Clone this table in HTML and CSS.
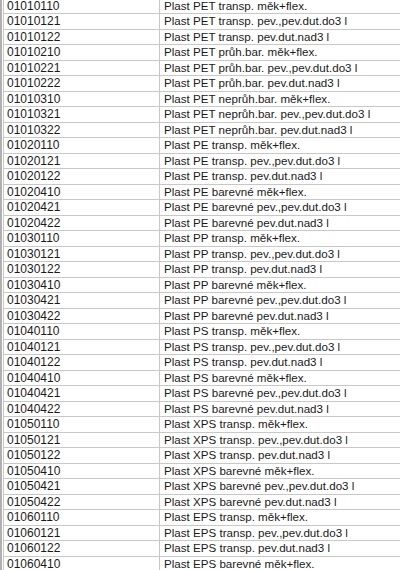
FILE: index.html
```html
<!DOCTYPE html>
<html lang="cs">
<head>
  <meta charset="UTF-8">
  <meta name="viewport" content="width=device-width, initial-scale=1.0">
  <title>Číselník plastů</title>
  <link rel="stylesheet" href="styles.css">
</head>
<body>
  <div class="sheet">
    <table class="codes">
      <tbody>
        <tr><td class="code">01010110</td><td class="name">Plast PET transp. měk+flex.</td></tr>
        <tr><td class="code">01010121</td><td class="name">Plast PET transp. pev.,pev.dut.do3 l</td></tr>
        <tr><td class="code">01010122</td><td class="name">Plast PET transp. pev.dut.nad3 l</td></tr>
        <tr><td class="code">01010210</td><td class="name">Plast PET průh.bar. měk+flex.</td></tr>
        <tr><td class="code">01010221</td><td class="name">Plast PET průh.bar. pev.,pev.dut.do3 l</td></tr>
        <tr><td class="code">01010222</td><td class="name">Plast PET průh.bar. pev.dut.nad3 l</td></tr>
        <tr><td class="code">01010310</td><td class="name">Plast PET neprůh.bar. měk+flex.</td></tr>
        <tr><td class="code">01010321</td><td class="name">Plast PET neprůh.bar. pev.,pev.dut.do3 l</td></tr>
        <tr><td class="code">01010322</td><td class="name">Plast PET neprůh.bar. pev.dut.nad3 l</td></tr>
        <tr><td class="code">01020110</td><td class="name">Plast PE transp. měk+flex.</td></tr>
        <tr><td class="code">01020121</td><td class="name">Plast PE transp. pev.,pev.dut.do3 l</td></tr>
        <tr><td class="code">01020122</td><td class="name">Plast PE transp. pev.dut.nad3 l</td></tr>
        <tr><td class="code">01020410</td><td class="name">Plast PE barevné měk+flex.</td></tr>
        <tr><td class="code">01020421</td><td class="name">Plast PE barevné pev.,pev.dut.do3 l</td></tr>
        <tr><td class="code">01020422</td><td class="name">Plast PE barevné pev.dut.nad3 l</td></tr>
        <tr><td class="code">01030110</td><td class="name">Plast PP transp. měk+flex.</td></tr>
        <tr><td class="code">01030121</td><td class="name">Plast PP transp. pev.,pev.dut.do3 l</td></tr>
        <tr><td class="code">01030122</td><td class="name">Plast PP transp. pev.dut.nad3 l</td></tr>
        <tr><td class="code">01030410</td><td class="name">Plast PP barevné měk+flex.</td></tr>
        <tr><td class="code">01030421</td><td class="name">Plast PP barevné pev.,pev.dut.do3 l</td></tr>
        <tr><td class="code">01030422</td><td class="name">Plast PP barevné pev.dut.nad3 l</td></tr>
        <tr><td class="code">01040110</td><td class="name">Plast PS transp. měk+flex.</td></tr>
        <tr><td class="code">01040121</td><td class="name">Plast PS transp. pev.,pev.dut.do3 l</td></tr>
        <tr><td class="code">01040122</td><td class="name">Plast PS transp. pev.dut.nad3 l</td></tr>
        <tr><td class="code">01040410</td><td class="name">Plast PS barevné měk+flex.</td></tr>
        <tr><td class="code">01040421</td><td class="name">Plast PS barevné pev.,pev.dut.do3 l</td></tr>
        <tr><td class="code">01040422</td><td class="name">Plast PS barevné pev.dut.nad3 l</td></tr>
        <tr><td class="code">01050110</td><td class="name">Plast XPS transp. měk+flex.</td></tr>
        <tr><td class="code">01050121</td><td class="name">Plast XPS transp. pev.,pev.dut.do3 l</td></tr>
        <tr><td class="code">01050122</td><td class="name">Plast XPS transp. pev.dut.nad3 l</td></tr>
        <tr><td class="code">01050410</td><td class="name">Plast XPS barevné měk+flex.</td></tr>
        <tr><td class="code">01050421</td><td class="name">Plast XPS barevné pev.,pev.dut.do3 l</td></tr>
        <tr><td class="code">01050422</td><td class="name">Plast XPS barevné pev.dut.nad3 l</td></tr>
        <tr><td class="code">01060110</td><td class="name">Plast EPS transp. měk+flex.</td></tr>
        <tr><td class="code">01060121</td><td class="name">Plast EPS transp. pev.,pev.dut.do3 l</td></tr>
        <tr><td class="code">01060122</td><td class="name">Plast EPS transp. pev.dut.nad3 l</td></tr>
        <tr><td class="code">01060410</td><td class="name">Plast EPS barevné měk+flex.</td></tr>
      </tbody>
    </table>
  </div>
</body>
</html>
```

FILE: styles.css
```css
html, body {
  margin: 0;
  padding: 0;
  background-color: #ffffff;
  overflow: hidden;
}
body {
  font-family: 'Liberation Sans', Arial, sans-serif;
  font-size: 12px;
  color: #1a1a1a;
}
.sheet {
  border-left: 2px solid #b0b0b0;
  padding-left: 1px;
  margin-top: -2.5px;
  height: 575px;
  overflow: hidden;
}
.codes {
  border-collapse: collapse;
  table-layout: fixed;
  width: 397px;
}
.codes td {
  height: 14.5px;
  padding: 0;
  line-height: 14px;
  border: 1px solid #c8c8c8;
  white-space: nowrap;
  overflow: hidden;
}
.code {
  width: 152px;
  padding-left: 3px !important;
}
.name {
  font-size: 11.6px;
  padding-left: 4px !important;
  border-right: none !important;
}
```
